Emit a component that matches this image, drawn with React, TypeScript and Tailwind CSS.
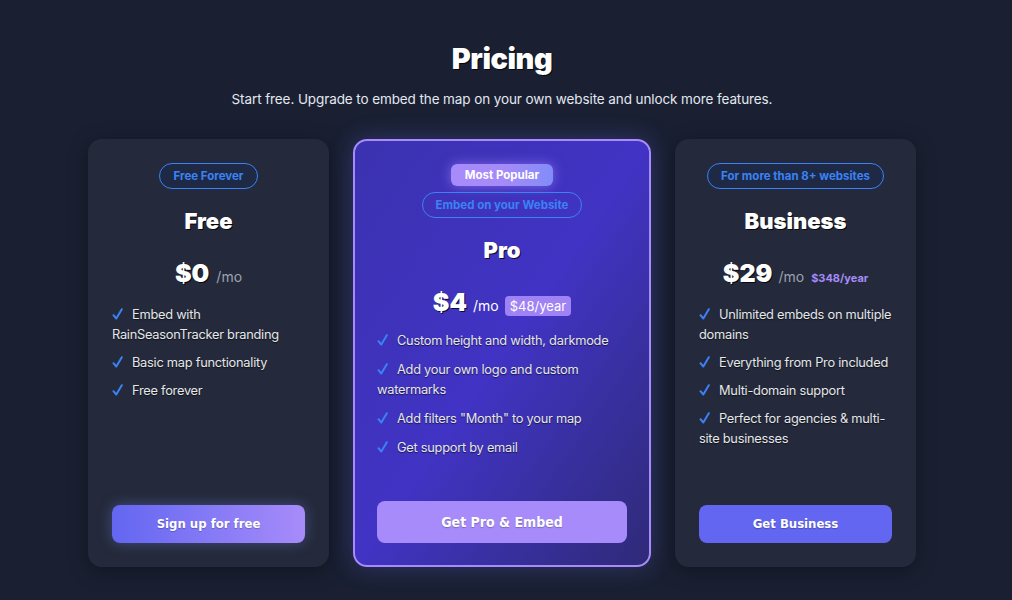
import React from "react";

const Check = () => (
  <svg width="11" height="12" viewBox="0 0 11 12" className="mr-[9px] inline-block align-[-1px]" fill="none">
    <path d="M1.5 7.2 L4.3 10.5 L9.8 1.2" stroke="#3b82f6" strokeWidth="2" strokeLinecap="round" strokeLinejoin="round" />
  </svg>
);

function Feature({ children }: { children: React.ReactNode }) {
  return (
    <li className="text-[12.8px] leading-[20px] tracking-[-0.25px] text-[#e5e7eb] [text-shadow:0_1px_1px_rgba(0,0,0,0.6)]">
      <Check />
      {children}
    </li>
  );
}

const heading = "font-['Inter',sans-serif] font-black text-white [text-shadow:1px_1px_0_rgba(0,0,0,0.8)]";
const btnFont = "font-['DejaVu_Sans_Condensed','DejaVu_Sans',sans-serif] font-bold [text-shadow:0_1px_1px_rgba(0,0,0,0.25)]";

export default function App() {
  return (
    <div className="min-h-[600px] w-full bg-[#1a2032] font-['Inter',sans-serif] pr-[8px]">
      <div className="flex flex-col items-center pt-[41px]">
        <h1 className={`${heading} text-[29px] leading-[36px] tracking-[-0.5px]`}>Pricing</h1>
        <p className="mt-[12px] text-[13.5px] leading-[20px] text-[#e2e8f0] tracking-[-0.1px]">
          Start free. Upgrade to embed the map on your own website and unlock more features.
        </p>
        <div className="mt-[30px] flex items-stretch gap-[24px]">
          {/* Free */}
          <div className="flex h-[428px] w-[241px] flex-col rounded-[14px] bg-[#242a3b] px-[24px] pb-[24px] pt-[24px] shadow-[0_4px_20px_rgba(0,0,0,0.35)]">
            <div className="flex justify-center">
              <span className="rounded-full border border-[#3b82f6] bg-[#1e2a45] px-[13px] py-[4px] text-[11.5px] font-bold leading-[16px] text-[#3b82f6]">
                Free Forever
              </span>
            </div>
            <h2 className={`${heading} mt-[18px] text-center text-[22px] leading-[28px]`}>Free</h2>
            <div className="mt-[22px] flex items-baseline justify-center">
              <span className={`${heading} text-[25px] leading-[32px]`}>$0</span>
              <span className="ml-[7px] text-[14px] text-[#9ca3af]">/mo</span>
            </div>
            <ul className="mt-[16px] flex flex-col gap-[8px]">
              <Feature>Embed with RainSeasonTracker branding</Feature>
              <Feature>Basic map functionality</Feature>
              <Feature>Free forever</Feature>
            </ul>
            <div className="mt-auto">
              <button className={`${btnFont} h-[38px] w-full rounded-[8px] bg-gradient-to-r from-[#6366f1] to-[#a78bfa] text-[13px] text-white shadow-[0_0_14px_rgba(129,140,248,0.35)]`}>
                Sign up for free
              </button>
            </div>
          </div>

          {/* Pro */}
          <div className="flex h-[428px] w-[298px] flex-col rounded-[14px] border-2 border-[#a78bfa] bg-gradient-to-br from-[#3b32b0] via-[#4133c4] to-[#2f2a78] px-[22px] pb-[22px] pt-[23px] shadow-[0_0_24px_rgba(99,102,241,0.3)]">
            <div className="flex justify-center">
              <span className="rounded-[6px] bg-gradient-to-r from-[#a78bfa] via-[#a68af8] to-[#818cf8] px-[14px] py-[3px] text-[11.5px] font-bold leading-[16px] text-white shadow-[0_0_12px_rgba(167,139,250,0.6)]">
                Most Popular
              </span>
            </div>
            <div className="mt-[6px] flex justify-center">
              <span className="rounded-full border border-[#3b82f6] px-[13px] py-[4px] text-[11.5px] font-bold leading-[16px] text-[#3b82f6]">
                Embed on your Website
              </span>
            </div>
            <h2 className={`${heading} mt-[18px] text-center text-[22px] leading-[28px]`}>Pro</h2>
            <div className="mt-[22px] flex items-baseline justify-center">
              <span className={`${heading} text-[25px] leading-[32px]`}>$4</span>
              <span className="ml-[6px] text-[14px] text-white">/mo</span>
              <span className="ml-[6px] rounded-[4px] bg-[#9f82f3] px-[5px] py-[1px] text-[13px] leading-[18px] text-white">$48/year</span>
            </div>
            <ul className="mt-[13px] flex flex-col gap-[9px]">
              <Feature>Custom height and width, darkmode</Feature>
              <Feature>Add your own logo and custom watermarks</Feature>
              <Feature>Add filters "Month" to your map</Feature>
              <Feature>Get support by email</Feature>
            </ul>
            <div className="mt-auto">
              <button className={`${btnFont} h-[42px] w-full rounded-[8px] bg-[#a78bfa] text-[14px] text-white`}>
                Get Pro &amp; Embed
              </button>
            </div>
          </div>

          {/* Business */}
          <div className="flex h-[428px] w-[241px] flex-col rounded-[14px] bg-[#242a3b] px-[24px] pb-[24px] pt-[24px] shadow-[0_4px_20px_rgba(0,0,0,0.35)]">
            <div className="flex justify-center">
              <span className="rounded-full border border-[#3b82f6] bg-[#1e2a45] px-[13px] py-[4px] text-[11.5px] font-bold leading-[16px] text-[#3b82f6]">
                For more than 8+ websites
              </span>
            </div>
            <h2 className={`${heading} mt-[18px] text-center text-[22px] leading-[28px]`}>Business</h2>
            <div className="mt-[22px] flex items-baseline justify-center">
              <span className={`${heading} text-[25px] leading-[32px]`}>$29</span>
              <span className="ml-[6px] text-[14px] text-[#9ca3af]">/mo</span>
              <span className="ml-[7px] text-[11px] font-bold text-[#a78bfa]">$348/year</span>
            </div>
            <ul className="mt-[16px] flex flex-col gap-[8px]">
              <Feature>Unlimited embeds on multiple domains</Feature>
              <Feature>Everything from Pro included</Feature>
              <Feature>Multi-domain support</Feature>
              <Feature>Perfect for agencies &amp; multi-site businesses</Feature>
            </ul>
            <div className="mt-auto">
              <button className={`${btnFont} h-[38px] w-full rounded-[8px] bg-[#6366f1] text-[13px] text-white`}>
                Get Business
              </button>
            </div>
          </div>
        </div>
      </div>
    </div>
  );
}
